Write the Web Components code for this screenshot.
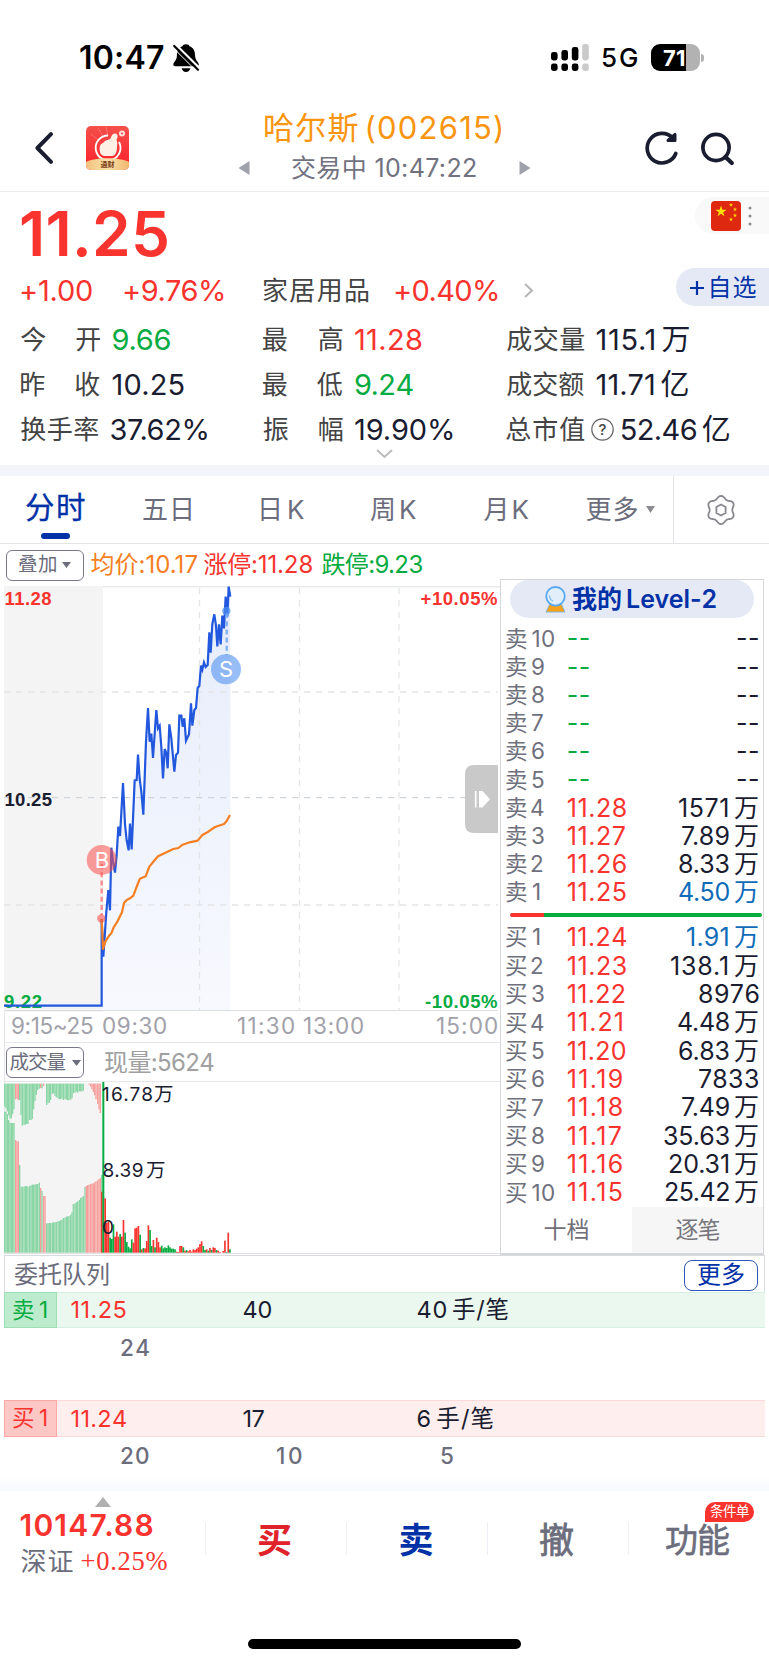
<!DOCTYPE html>
<html lang="zh-CN">
<head>
<meta charset="UTF-8">
<title>哈尔斯 002615</title>
<style>
  html { background: #fff; }
  body {
    margin: 0;
    width: 769px;
    height: 1665px;
    overflow: hidden;
    font-family: Inter, "Noto Sans CJK SC", sans-serif;
    font-size: 24px;
    line-height: 1;
    color: #1a1c30;
    --red: #f9332e;
    --green: #06ab41;
    --blue: #0031a6;
    --grey: #6c6d7c;
    --label: #444;
    --line: #e3e4e7;
  }
</style>
</head>
<body>
<stock-page></stock-page>

<script>
// строка текста, которая занимает ровно w пикселей от края первой буквы до края последней
// w - ширина, gap - отступ слева, size / weight / color - шрифт
const CJK = /[\u4e00-\u9fff]+/g;
const ctx = document.createElement("canvas").getContext("2d");

class InkText extends HTMLElement {
  constructor() {
    super();
    this.attachShadow({ mode: "open" }).innerHTML = `
      <style>
        :host { display: block; flex: none; white-space: nowrap; line-height: 1; }
        span { display: inline-block; }
      </style>
      <span><slot></slot></span>`;
  }

  connectedCallback() {
    if (this.ready) return;
    this.ready = true;
    const a = (name) => this.getAttribute(name);
    if (a("size")) this.style.fontSize = a("size") + "px";
    if (a("weight")) this.style.fontWeight = a("weight");
    if (a("color")) this.style.color = a("color");
    if (a("gap")) this.style.marginLeft = a("gap") + "px";

    const text = this.textContent.trim();
    const end = text.length - 1;
    // небольшой зазор между иероглифом и цифрой
    this.innerHTML = [...text].map((ch, i) => {
      const isCjk = ch.match(CJK);
      const style = [];
      if (isCjk && /[0-9A-Za-z]/.test(text[i - 1] || "")) style.push("margin-left:.16em");
      if (isCjk && /[0-9A-Za-z(]/.test(text[i + 1] || "")) style.push("margin-right:.16em");
      // после последней буквы интервал не нужен
      if (i === end && end > 0) style.push("letter-spacing:0");
      return style.length ? `<span style="${style.join(";")}">${ch}</span>` : ch;
    }).join("");

    ctx.font = getComputedStyle(this).font;
    const first = ctx.measureText(text[0]);
    const last = ctx.measureText(text[end]);
    const left = -first.actualBoundingBoxLeft;
    const right = last.width - last.actualBoundingBoxRight;
    const box = this.shadowRoot.querySelector("span");
    const ink = box.getBoundingClientRect().width - left - right;
    const w = Number(a("w")) || ink;
    if (end > 0) this.style.letterSpacing = (w - ink) / end + "px";
    box.style.marginLeft = -left + "px";
    this.style.width = w + "px";
  }
}
customElements.define("ink-text", InkText);

// базовый класс: css + html в открытом shadow root
class Block extends HTMLElement {
  connectedCallback() {
    if (this.shadowRoot) return;
    this.attachShadow({ mode: "open" }).innerHTML =
      `<style>:host { display: block; box-sizing: border-box; } svg { display: block; flex: none; overflow: visible; }${this.css()}</style>${this.html()}`;
  }
  css() { return ""; }
  html() { return "<slot></slot>"; }
}

class StatusBar extends Block {
  css() {
    return `
      :host { display: flex; align-items: center; height: 115px; color: #000; }
      .bell { margin-left: 9px; }
      .signal { margin-left: 352px; }
      .battery {
        display: flex; align-items: center; box-sizing: border-box;
        width: 49px; height: 27px; margin-left: 14px; padding-left: 12px; border-radius: 9px;
        background: linear-gradient(90deg, #000 35px, #b2b2b2 35px); color: #fff;
      }
      .nub { width: 3px; height: 8px; margin-left: 1px; border-radius: 0 3px 3px 0; background: #b2b2b2; }`;
  }
  html() {
    return `
      <ink-text w="84" gap="80" size="32" weight="600">10:47</ink-text>
      <svg class="bell" width="26" height="28" viewBox="0 0 26 28">
        <path d="M13 0.3C11 0.3 9.7 1.3 9.5 2.2C5.6 3.6 3.9 7 3.9 11.5C3.9 16.5 0.3 18 0.3 20.6C0.3 21.6 1.2 22.2 2.2 22.2H24C25 22.2 25.8 21.6 25.8 20.6C25.8 18 22.1 16.5 22.1 11.5C22.1 7 20.4 3.6 16.5 2.2C16.2 1.2 15 0.3 13 0.3Z"/>
        <path d="M8.6 24.2H17.4C16.8 26.6 15.2 27.9 13 27.9S9.2 26.6 8.6 24.2Z"/>
        <path d="M1.7 -0.5L27 24.6" stroke="#fff" stroke-width="2.2"/>
        <path d="M0 3.6L22 25.6" stroke="#fff" stroke-width="1"/>
        <path d="M1.2 2L25 25.8" stroke="#000" stroke-width="2.2" stroke-linecap="round"/>
      </svg>
      <svg class="signal" width="38" height="27" viewBox="0 0 38 27">
        <g fill="#000">
          <rect x="0" y="8" width="6.6" height="8.5" rx="2.4"/><rect x="0" y="19.5" width="6.6" height="7.5" rx="2.4"/>
          <rect x="10.4" y="6" width="6.6" height="10.5" rx="2.4"/><rect x="10.4" y="19.5" width="6.6" height="7.5" rx="2.4"/>
          <rect x="20.8" y="3" width="6.6" height="13.5" rx="2.4"/><rect x="20.8" y="19.5" width="6.6" height="7.5" rx="2.4"/>
        </g>
        <g fill="#cacaca">
          <rect x="31.2" y="0" width="6.6" height="16.5" rx="2.4"/><rect x="31.2" y="19.5" width="6.6" height="7.5" rx="2.4"/>
        </g>
      </svg>
      <ink-text w="35" gap="13" size="26" weight="500">5G</ink-text>
      <div class="battery"><ink-text w="22" size="22" weight="700">71</ink-text></div>
      <div class="nub"></div>`;
  }
}
customElements.define("status-bar", StatusBar);

class NavBar extends Block {
  css() {
    return `
      :host { display: flex; align-items: center; height: 77px; padding-bottom: 10px; border-bottom: 1px solid #ececee; }
      .title { align-self: flex-start; width: 293px; margin-left: 109px; }
      .name { display: flex; align-items: center; height: 25px; }
      .sub { display: flex; align-items: center; height: 25px; margin-top: 15.5px; }`;
  }
  html() {
    return `
      <svg width="18" height="32" viewBox="0 0 18 32" style="margin-left:35px">
        <path d="M16 2.2L2.4 16L16 29.8" fill="none" stroke="#1a1c30" stroke-width="4" stroke-linecap="round" stroke-linejoin="round"/>
      </svg>
      <svg width="43" height="44" viewBox="0 0 43 44" style="margin-left:33px">
        <defs>
          <linearGradient id="r" x1="0" y1="0" x2="0" y2="1"><stop offset="0" stop-color="#f5504a"/><stop offset="1" stop-color="#fb1f2b"/></linearGradient>
          <linearGradient id="y" x1="0" y1="0" x2="1" y2="0"><stop offset="0" stop-color="#f2c27c"/><stop offset=".5" stop-color="#fbe0aa"/><stop offset="1" stop-color="#efb96f"/></linearGradient>
          <clipPath id="c"><rect width="43" height="44" rx="5"/></clipPath>
        </defs>
        <g clip-path="url(#c)">
          <rect width="43" height="44" fill="url(#r)"/>
          <path d="M12 2L18 12M20 1L22 10M5 8L12 14" stroke="#ff8d80" stroke-width="1" opacity=".6"/>
          <path d="M22 9.5A12.4 12.4 0 1 0 33 16" fill="none" stroke="#fff" stroke-width="1.8"/>
          <path d="M14 20C14.5 17.5 17 17.5 18 16C20 13.5 23 14.5 24.5 12.5C25.5 10.5 26 7.5 29 7.5C32.5 8 32 11 30.5 14C32 17 31 19 31 21C31 25 30 29.5 26 30H18C14 29.5 13 24 14 20Z" fill="#fff0e6"/>
          <circle cx="36" cy="7.5" r="3" fill="#ffe1dc"/><circle cx="36" cy="7.5" r="1.1" fill="#f5504a"/>
          <path d="M0 36C10 31 33 31 43 36V44H0Z" fill="url(#y)"/>
        </g>
        <text x="14.5" y="40.6" font-size="7" font-weight="700" fill="#7a3d12" textLength="14">通财</text>
      </svg>
      <div class="title">
        <div class="name"><ink-text w="236" gap="27" size="31" color="#fa9510">哈尔斯(002615)</ink-text></div>
        <div class="sub">
          <svg width="12" height="14"><path d="M11.5 0V14L0.5 7Z" fill="#a0a1ac"/></svg>
          <ink-text w="184" gap="42" size="25" color="#717280">交易中 10:47:22</ink-text>
          <svg width="12" height="14" style="margin-left:43px"><path d="M0.5 0V14L11.5 7Z" fill="#a0a1ac"/></svg>
        </div>
      </div>
      <svg width="33" height="34" viewBox="0 0 33 34" style="margin-left:114px" fill="none" stroke="#1a1c30">
        <path d="M30.8 22.5A14.8 14.8 0 1 1 27.6 6.8" stroke-width="3.7" stroke-linecap="round"/>
        <path d="M30 3.4V9.4H23Z" stroke-width="3" stroke-linejoin="round" fill="#1a1c30"/>
      </svg>
      <svg width="33" height="33" viewBox="0 0 33 33" style="margin-left:23px" fill="none" stroke="#1a1c30" stroke-width="3.7">
        <circle cx="15" cy="15.5" r="13.1"/><path d="M24.5 25L30.8 31" stroke-width="4.2" stroke-linecap="round"/>
      </svg>`;
  }
}
customElements.define("nav-bar", NavBar);

// [label, ширина, value, ширина, цвет]
const stats = [
  [["今开", 80, "9.66", 58, "green"], ["最高", 80, "11.28", 67, "red"], ["成交量", 78, "115.1万", 93]],
  [["昨收", 80, "10.25", 71], ["最低", 80, "9.24", 58, "green"], ["成交额", 78, "11.71亿", 92]],
  [["换手率", 78, "37.62%", 97], ["振幅", 80, "19.90%", 98], ["总市值", 78, "52.46亿", 108, "", true]],
];

class QuoteHeader extends Block {
  css() {
    return `
      :host { height: 284px; border-bottom: 11px solid #f4f5fa; }
      .top { display: flex; height: 125px; }
      .main { width: 676px; }
      .price { display: flex; align-items: center; height: 84px; padding-left: 21px; }
      .diff { display: flex; align-items: center; height: 29px; padding-left: 21px; }
      .side { display: flex; flex-direction: column; align-items: flex-end; gap: 34px; padding-top: 5px; width: 93px; }
      .flag { display: flex; align-items: center; width: 74px; height: 37px; border-radius: 19px 0 0 19px; background: #f9f9fa; }
      .add { display: flex; align-items: center; width: 93px; height: 38px; border-radius: 19px 0 0 19px; background: #e5e9f6; }
      .stats { display: grid; grid-template-columns: 242.5px 243.5px 1fr; grid-auto-rows: 45px; padding-left: 20.2px; }
      .cell { display: flex; align-items: center; }
      .more { display: flex; justify-content: center; margin-top: -3px; }`;
  }
  html() {
    const cell = ([label, lw, value, vw, color, help]) => `
      <div class="cell">
        <ink-text w="${lw}" size="26" color="var(--label)">${label}</ink-text>
        ${help ? `<svg width="23" height="23" viewBox="0 0 23 23" style="margin-left:6.5px"><circle cx="11.5" cy="11.5" r="10.7" fill="none" stroke="#666" stroke-width="1.2"/><text x="11.5" y="16.7" font-size="15" font-weight="500" fill="#444" text-anchor="middle">?</text></svg>` : ""}
        <ink-text w="${vw}" gap="${help ? 8 : 12.3}" size="29" ${color ? `color="var(--${color})"` : ""}>${value}</ink-text>
      </div>`;
    const star = "M0 -1L.23 -.31L.95 -.31L.36 .12L.59 .81L0 .38L-.59 .81L-.36 .12L-.95 -.31L-.23 -.31Z";
    return `
      <div class="top">
        <div class="main">
          <div class="price"><ink-text w="146" size="62" weight="600" color="var(--red)">11.25</ink-text></div>
          <div class="diff">
            <ink-text w="71" size="29" color="var(--red)">+1.00</ink-text>
            <ink-text w="100" gap="32" size="29" color="var(--red)">+9.76%</ink-text>
            <ink-text w="106" gap="39" size="26" color="var(--label)">家居用品</ink-text>
            <ink-text w="103" gap="26" size="29" color="var(--red)">+0.40%</ink-text>
            <svg width="9" height="15" style="margin-left:26px"><path d="M1 1L8 7.5L1 14" fill="none" stroke="#b5b5b8" stroke-width="2"/></svg>
          </div>
        </div>
        <div class="side">
          <div class="flag">
            <svg width="30" height="30" viewBox="0 0 30 30" style="margin-left:16px">
              <rect width="30" height="30" rx="4" fill="#de2910"/>
              <g fill="#ffde00">
                <path d="${star}" transform="translate(10,10.5) scale(6)"/>
                <path d="${star}" transform="translate(20,4) scale(2.2)"/><path d="${star}" transform="translate(24,8.5) scale(2.2)"/>
                <path d="${star}" transform="translate(24,14.5) scale(2.2)"/><path d="${star}" transform="translate(20,18.5) scale(2.2)"/>
              </g>
            </svg>
            <svg width="4" height="20" style="margin-left:7px" fill="#8d8d92"><circle cx="2" cy="2" r="1.5"/><circle cx="2" cy="10" r="1.5"/><circle cx="2" cy="18" r="1.5"/></svg>
          </div>
          <div class="add">
            <svg width="14" height="14" style="margin:2px 0 0 14px"><path d="M7 0V14M0 7H14" stroke="#0031a6" stroke-width="2.2"/></svg>
            <ink-text w="46" gap="6.5" size="24" color="var(--blue)" style="margin-top:2px">自选</ink-text>
          </div>
        </div>
      </div>
      <div class="stats">${stats.flat().map(cell).join("")}</div>
      <div class="more"><svg width="17" height="10"><path d="M1 1L8.5 8L16 1" fill="none" stroke="#bbb" stroke-width="2"/></svg></div>`;
  }
}
customElements.define("quote-header", QuoteHeader);

class PeriodTab extends Block {
  css() {
    return `
      :host { display: flex; flex-direction: column; align-items: center; height: 67px; color: var(--grey); }
      div { display: flex; align-items: center; height: 57px; padding-top: 10px; box-sizing: border-box; }
      i { width: 29px; height: 6px; border-radius: 3px; }
      :host([active]) { color: var(--blue); }
      :host([active]) div { padding-top: 7px; -webkit-text-stroke: .3px; }
      :host([active]) i { background: var(--blue); }`;
  }
  html() { return `<div><slot></slot></div><i></i>`; }
}
customElements.define("period-tab", PeriodTab);

class PeriodTabs extends Block {
  css() {
    return `
      :host { display: flex; height: 68px; border-bottom: 1px solid var(--line); }
      .gear { display: flex; align-items: center; box-sizing: border-box; flex: 1; height: 67px; border-left: 1px solid var(--line); }`;
  }
  html() {
    // контур шестерёнки с шестью зубцами
    let gear = "";
    for (let i = 0; i < 72; i++) {
      const t = i * Math.PI / 36;
      const r = 12.7 + 1.4 * Math.cos(6 * t);
      gear += (i ? "L" : "M") + (15 + r * Math.sin(t)).toFixed(1) + " " + (15 - r * Math.cos(t)).toFixed(1);
    }
    return `
      <period-tab active style="margin-left:26px"><ink-text w="59" size="29.5">分时</ink-text></period-tab>
      <period-tab style="margin-left:58px"><ink-text w="48" size="26">五日</ink-text></period-tab>
      <period-tab style="margin-left:70px"><ink-text w="43" size="26">日K</ink-text></period-tab>
      <period-tab style="margin-left:66px"><ink-text w="46" size="26">周K</ink-text></period-tab>
      <period-tab style="margin-left:67.5px"><ink-text w="45" size="26">月K</ink-text></period-tab>
      <period-tab style="margin-left:58px"><ink-text w="51" size="26">更多</ink-text></period-tab>
      <svg width="9" height="7" style="margin:30px 18.5px 0 8px"><path d="M0 0H9L4.5 7Z" fill="#8c8c92"/></svg>
      <div class="gear">
        <svg width="30" height="30" viewBox="0 0 30 30" style="margin-left:32px" fill="none" stroke="#88888e" stroke-width="1.8" stroke-linejoin="round">
          <path d="${gear}Z"/><path d="M15 9.5L19.6 12V18L15 20.5L10.4 18V12Z"/>
        </svg>
      </div>`;
  }
}
customElements.define("period-tabs", PeriodTabs);

class DropButton extends Block {
  css() {
    return `
      :host {
        display: flex; align-items: center; justify-content: center; flex: none;
        width: 78px; height: 31px; border: 1.4px solid #77788a; border-radius: 6px; color: var(--grey);
      }
      svg { margin-left: 6px; }`;
  }
  html() { return `<slot></slot><svg width="9" height="6"><path d="M0 0H9L4.5 6Z" fill="#6c6d7c"/></svg>`; }
}
customElements.define("drop-button", DropButton);

// точки графиков в третях пикселя
const price = "12,1292 305,1292 305,1032 310,1145 314,1085 319,1010 325,945 330,1006 334,818 339,860 345,893 350,840 355,755 360,783 369,624 375,748 380,796 386,826 390,746 395,823 404,616 410,615 414,539 419,612 424,650 430,719 438,500 444,399 449,500 454,476 459,549 469,405 474,460 479,452 484,516 489,610 494,522 499,534 503,580 508,448 514,490 523,590 528,540 534,533 538,422 544,422 548,455 553,430 558,497 567,478 573,385 577,452 583,405 588,399 593,338 598,333 603,272 607,284 612,262 617,276 623,270 628,172 632,233 637,147 643,118 648,152 652,214 657,148 662,208 667,122 672,160 677,65 682,125 686,35 691,65";
const average = "305,1032 309,1122 316,1100 326,1084 334,1075 341,1057 352,1040 366,1012 372,984 380,975 390,970 400,962 412,930 420,911 437,904 448,875 462,858 474,844 490,836 520,822 535,819 548,809 565,803 593,797 607,780 625,770 645,756 672,747 680,738 690,720";

class PriceChart extends Block {
  css() {
    return `
      :host { height: 425px; }
      .b { font: bold 18.5px "Liberation Sans", sans-serif; }`;
  }
  html() {
    return `
      <svg width="500" height="425" viewBox="0 586 500 425">
        <defs><linearGradient id="g" x1="0" y1="0" x2="0" y2="1"><stop offset="0" stop-color="#e6ecfb"/><stop offset="1" stop-color="#f7f9fe"/></linearGradient></defs>
        <rect x="4" y="586" width="99" height="426" fill="#f4f4f4"/>
        <polygon points="${price.split(" ").slice(2).join(" ")} 691,1306 305,1306" fill="url(#g)" transform="translate(0,575) scale(.33333)"/>
        <g fill="none" stroke="#e4e5e7" stroke-width="1.3" stroke-dasharray="6.2 5.8">
          <path d="M4 692H498M4 905H498M199.5 588V1010M299.5 588V1010M399 588V1010"/>
          <path d="M4 797.7H498" stroke="#cfd5da"/>
        </g>
        <path d="M103 586.8H500M4 1010.5H498" stroke="#dcdfe2"/>
        <text class="b" x="4.5" y="605" fill="#f9332e" textLength="47">11.28</text>
        <text class="b" x="4.5" y="805.8" fill="#1a1c30" textLength="47.5">10.25</text>
        <text class="b" x="4" y="1007.5" fill="#06ab41" textLength="38">9.22</text>
        <text class="b" x="420.5" y="605" fill="#f9332e" textLength="77">+10.05%</text>
        <text class="b" x="425" y="1007.5" fill="#06ab41" textLength="72.5">-10.05%</text>
        <g fill="none" stroke-width="6.6" transform="translate(0,575) scale(.33333)">
          <polyline points="${price}" stroke="#2258dd"/>
          <polyline points="${average}" stroke="#f57f22" stroke-linejoin="round"/>
        </g>
        <path d="M101.7 864V915" stroke="#fb8e8b" stroke-width="2.4" stroke-dasharray="5 3.2"/>
        <circle cx="101.3" cy="918.5" r="4.2" fill="#f9524e" opacity=".6"/>
        <circle cx="101.7" cy="860" r="15" fill="#f9504b" opacity=".55"/>
        <text x="101.9" y="867.5" font-size="22" fill="#fff" text-anchor="middle">B</text>
        <path d="M226.7 613V655" stroke="#82b1f3" stroke-width="2.4" stroke-dasharray="5 3.2"/>
        <circle cx="226.3" cy="611" r="4.2" fill="#4f92f2" opacity=".7"/>
        <circle cx="226" cy="669.3" r="15" fill="#4389f0" opacity=".55"/>
        <text x="226" y="677.3" font-size="22" fill="#fff" text-anchor="middle">S</text>
        <path d="M498 765H474Q465 765 465 774V824Q465 833 474 833H498Z" fill="#c9c9c9"/>
        <path d="M475.7 791V807.5" stroke="#fff" stroke-width="1.6"/>
        <path d="M479 791H482.5L490 799.3L482.5 807.5H479Z" fill="#fff"/>
      </svg>`;
  }
}
customElements.define("price-chart", PriceChart);

// аукцион: [x, верхний край снизу, нижний край сверху, цвет]
const auction = [
  [12, 215, 200, "g"], [16, 215, 205, "g"], [20, 222, 214, "g"], [24, 240, 226, "g"], [28, 248, 236, "g"], [32, 249, 235, "g"], [36, 249, 222, "g"], [40, 249, 208, "g"],
  [45, 300, 178, "r"], [49, 304, 176, "r"], [53, 304, 180, "r"], [57, 375, 180, "g"], [61, 440, 225, "g"],
  [65, 440, 257, "g"], [70, 440, 254, "g"], [74, 438, 254, "g"], [78, 438, 252, "g"], [82, 440, 252, "g"], [87, 438, 240, "g"], [91, 436, 240, "g"], [95, 434, 236, "g"],
  [99, 434, 208, "g"], [103, 433, 183, "g"], [107, 433, 165, "g"], [111, 432, 150, "g"], [116, 428, 146, "g"], [120, 444, 144, "r"], [124, 453, 145, "g"], [129, 468, 138, "r"], [133, 468, 126, "r"],
  [138, 550, 195, "g"], [142, 550, 190, "g"], [146, 549, 188, "g"], [150, 549, 180, "g"], [155, 548, 162, "g"], [159, 547, 160, "g"], [163, 547, 168, "g"], [167, 546, 172, "g"], [172, 544, 175, "g"],
  [176, 543, 177, "g"], [180, 541, 178, "g"], [184, 539, 175, "g"], [188, 534, 180, "g"], [193, 533, 178, "g"], [197, 530, 178, "g"], [201, 529, 181, "g"], [205, 528, 180, "g"], [210, 524, 179, "g"], [214, 517, 175, "g"],
  [218, 492, 160, "g"], [223, 490, 158, "g"], [227, 487, 155, "g"], [231, 484, 158, "g"], [236, 480, 154, "g"], [240, 474, 154, "g"], [244, 472, 154, "g"], [248, 468, 152, "g"],
  [253, 441, 130, "g"], [257, 438, 126, "r"], [261, 435, 131, "r"], [265, 434, 134, "r"], [270, 432, 140, "r"], [274, 431, 148, "r"], [278, 430, 156, "r"], [282, 427, 166, "r"], [286, 424, 178, "r"], [291, 421, 192, "r"], [295, 417, 208, "r"], [299, 414, 219, "r"],
];
const volume = "r475 r548 r545 g593 g597 g553 r590 r575 r590 g582 r590 r540 g578 g606 g620 g625 g598 r608 r565 r563 r558 g584 r628 g624 r625 r603 r556 g570 g618 r600 g622 r593 r606 r622 g617 g625 g622 g624 g616 g622 g626 g626 g628 r635 r636 r618 r618 g622 r632 g630 r634 r630 r635 r628 r630 r626 r622 r612 r604 g618 g630 r628 g632 r624 g630 r622 r624 g630 r632 r636 g638 r633 r602 g636 r578 g628".split(" ");

class VolumeChart extends Block {
  css() { return `:host { height: 172px; }`; }
  html() {
    const bar = (x, y1, y2, fill, w) => `<rect x="${x}" y="${y1}" width="${w}" height="${Math.max(0, y2 - y1)}" fill="${fill}"/>`;
    const pale = { g: "#8ad6a4", r: "#f79f9d" };
    const solid = { g: "#06ab41", r: "#f9332e" };
    return `
      <svg width="500" height="172" viewBox="0 1082 500 172">
        <rect x="4" y="1083" width="98" height="170" fill="#f4f4f4"/>
        <path d="M4.5 1082V1254" stroke="#e3e6e8"/>
        <g transform="translate(0,1040) scale(.33333)">
          ${auction.map(([x, low, high, c]) => bar(x, 131, high, pale[c], 4) + bar(x, low, 638, pale[c], 4)).join("")}
          ${bar(303, 405, 455, "#90d8a8", 5)}${bar(303, 455, 638, "#e0402c", 5)}
          ${bar(307, 126, 638, "#06ab41", 6)}
          ${volume.map((v, i) => bar((313 + i * 4.99).toFixed(1), Number(v.slice(1)), 638, solid[v[0]], 4.99)).join("")}
        </g>
        <g font-size="19" fill="#1a1c30">
          <text x="102" y="1101" textLength="51">16.78</text><text x="154" y="1101" font-size="19.5">万</text>
          <text x="102.5" y="1177" textLength="41">8.39</text><text x="146" y="1177" font-size="19.5">万</text>
          <text x="102" y="1233.5">0</text>
        </g>
        <path d="M4 1253.5H500" stroke="#dfe1e4"/>
      </svg>`;
  }
}
customElements.define("volume-chart", VolumeChart);

class ChartPanel extends Block {
  css() {
    return `
      :host { width: 500px; flex: none; }
      .info { display: flex; align-items: center; height: 42px; padding-left: 6px; }
      .axis { display: flex; align-items: center; height: 31px; margin-left: 4px; border-left: 1px solid var(--line); color: #a1a1aa; border-bottom: 1px solid #e6e7ea; }
      .vol { display: flex; align-items: center; height: 37px; margin-left: 4px; padding: 1px 0 0 1px; border-left: 1px solid var(--line); border-bottom: 1px solid #e6e7ea; }`;
  }
  html() {
    return `
      <div class="info">
        <drop-button><ink-text w="37" size="19.5">叠加</ink-text></drop-button>
        <ink-text w="107" gap="6.4" color="#f57f22">均价:10.17</ink-text>
        <ink-text w="109" gap="6" color="var(--red)">涨停:11.28</ink-text>
        <ink-text w="101" gap="9" color="var(--green)">跌停:9.23</ink-text>
      </div>
      <price-chart></price-chart>
      <div class="axis">
        <ink-text w="81" gap="7" size="22.5">9:15~25</ink-text>
        <ink-text w="63" gap="10" size="22.5">09:30</ink-text>
        <ink-text w="56" gap="72" size="22.5">11:30</ink-text>
        <ink-text w="59" gap="10" size="22.5">13:00</ink-text>
        <ink-text w="60" gap="74" size="22.5">15:00</ink-text>
      </div>
      <div class="vol">
        <drop-button><ink-text w="56" size="19.5">成交量</ink-text></drop-button>
        <ink-text w="109" gap="21" color="#a0a0a0">现量:5624</ink-text>
      </div>
      <volume-chart></volume-chart>`;
  }
}
customElements.define("chart-panel", ChartPanel);

const sell = [
  ["卖10", 48], ["卖9", 38], ["卖8", 38], ["卖7", 37], ["卖6", 38], ["卖5", 38],
  ["卖4", 38, "11.28", 58, "1571万", 79], ["卖3", 38, "11.27", 57, "7.89万", 76],
  ["卖2", 37, "11.26", 58, "8.33万", 79], ["卖1", 34, "11.25", 58, "4.50万", 79, "#0f6cb8"],
];
const buy = [
  ["买1", 34, "11.24", 58, "1.91万", 71, "#0f6cb8"], ["买2", 37, "11.23", 58, "138.1万", 87],
  ["买3", 38, "11.22", 57, "8976", 59], ["买4", 38, "11.21", 54, "4.48万", 80],
  ["买5", 38, "11.20", 58, "6.83万", 79], ["买6", 38, "11.19", 54, "7833", 59],
  ["买7", 37, "11.18", 54, "7.49万", 76], ["买8", 38, "11.17", 53, "35.63万", 94],
  ["买9", 38, "11.16", 54, "20.31万", 89], ["买10", 48, "11.15", 54, "25.42万", 93],
];

class OrderBook extends Block {
  css() {
    return `
      :host { width: 264px; height: 676px; margin-top: 35px; border: 1px solid #d5d6da; border-bottom-width: 2px; }
      .level2 { display: flex; align-items: center; height: 38px; margin: 0 9px; padding-left: 35px; border-radius: 19px; background: #e5e9f6; }
      .rows { display: flex; flex-direction: column; }
      .row { display: grid; grid-template-columns: 61.8px 1fr auto; align-items: center; padding: 0 5px; }
      .sell { margin-top: 6.9px; } .sell .row { height: 28.2px; }
      .buy .row { height: 28.35px; }
      .ratio { height: 4px; margin: 6.2px 1px 6.6px 9px; border-radius: 2px; background: linear-gradient(90deg, #f9332e 34px, #0aac40 34px); }
      .tabs { display: grid; grid-template-columns: 131px 1fr; height: 46px; }
      .tabs div { display: flex; align-items: center; justify-content: center; padding-top: 2px; }
      .tabs div + div { background: #f6f6f7; }`;
  }
  html() {
    const row = ([label, lw, p, pw, v, vw, color]) => `
      <div class="row">
        <ink-text w="${lw}" size="22.5" color="#6f707d">${label}</ink-text>
        <ink-text w="${p ? pw : 21}" size="25" color="var(--${p ? "red" : "green"})">${p || "--"}</ink-text>
        <ink-text w="${v ? vw : 21}" size="25" ${color ? `color="${color}"` : ""}>${v || "--"}</ink-text>
      </div>`;
    return `
      <div class="level2">
        <svg width="21" height="27" viewBox="0 0 21 27">
          <path d="M4.5 18.5H16.5L20 26H1Z" fill="#f7a21b" stroke="#6db3ee" stroke-width=".8"/>
          <circle cx="10.5" cy="10.3" r="9.3" fill="#e2effb" stroke="#56a9ef" stroke-width="1.8"/>
          <path d="M4.5 9.5C4.6 12 6 14.2 8 15" fill="none" stroke="#79b9f1" stroke-width="1.2"/>
        </svg>
        <ink-text w="144" gap="6" size="25" weight="600" color="var(--blue)">我的Level-2</ink-text>
      </div>
      <div class="rows sell">${sell.map(row).join("")}</div>
      <div class="ratio"></div>
      <div class="rows buy">${buy.map(row).join("")}</div>
      <div class="tabs">
        <div><ink-text w="44" size="23" color="#707078">十档</ink-text></div>
        <div><ink-text w="44" size="23" color="#77777d">逐笔</ink-text></div>
      </div>`;
  }
}
customElements.define("order-book", OrderBook);

class OrderQueue extends Block {
  css() {
    return `
      :host { height: 221px; padding: 0 4px; }
      .head { display: flex; align-items: center; justify-content: space-between; box-sizing: border-box; height: 37px; border: 1px solid #d9dade; border-bottom: 0; padding: 2px 6px 0 9px; }
      .more { display: flex; align-items: center; justify-content: center; box-sizing: border-box; width: 74px; height: 31px; border: 1.5px solid #2e55b6; border-radius: 8px; }
      .level { display: flex; align-items: center; box-sizing: border-box; height: 36px; }
      .tag { display: flex; align-items: center; box-sizing: border-box; width: 53px; height: 36px; padding-left: 9px; }
      .s { background: #eaf8ef; box-shadow: inset 0 1px #d5f1df, inset 0 -1px #d5f1df; } .s .tag { background: #bdebcd; box-shadow: inset 0 0 0 1px #a0dfb6; }
      .b { height: 37px; background: #feeeee; box-shadow: inset 0 1px #fddada, inset 0 -1px #fddada; } .b .tag { height: 37px; background: #fdc7c6; box-shadow: inset 0 0 0 1px #fba8a6; }
      .hands { display: flex; height: 63px; padding: 9px 0 0 117px; color: var(--grey); font-weight: 500; }
      .b + .hands { padding-top: 8px; }`;
  }
  html() {
    return `
      <div class="head">
        <ink-text w="95" size="24" color="var(--grey)">委托队列</ink-text>
        <div class="more"><ink-text w="46" size="24" color="var(--blue)">更多</ink-text></div>
      </div>
      <div class="level s">
        <div class="tag"><ink-text w="34" size="22.5" color="var(--green)">卖1</ink-text></div>
        <ink-text w="54" gap="14.6" size="23.5" color="var(--red)">11.25</ink-text>
        <ink-text w="28" gap="118" size="23.5">40</ink-text>
        <ink-text w="91" gap="146" size="23.5">40手/笔</ink-text>
      </div>
      <div class="hands"><ink-text w="28" size="22.5">24</ink-text></div>
      <div class="level b">
        <div class="tag"><ink-text w="34" size="22.5" color="var(--red)">买1</ink-text></div>
        <ink-text w="54" gap="14.6" size="23.5" color="var(--red)">11.24</ink-text>
        <ink-text w="21" gap="118" size="23.5">17</ink-text>
        <ink-text w="76" gap="153" size="23.5">6手/笔</ink-text>
      </div>
      <div class="hands">
        <ink-text w="28" size="22.5">20</ink-text>
        <ink-text w="25" gap="128" size="22.5">10</ink-text>
        <ink-text w="13" gap="139" size="22.5">5</ink-text>
      </div>`;
  }
}
customElements.define("order-queue", OrderQueue);

class TradeButton extends Block {
  css() {
    return `
      :host { position: relative; display: flex; align-items: center; justify-content: center; width: 141px; height: 98px; flex: none; }
      :host::before { content: ""; position: absolute; left: 1px; top: 31px; width: 1px; height: 33px; background: #eef0f8; }
      ::slotted([slot=badge]) {
        position: absolute; left: 78px; top: 11px; display: flex; align-items: center; justify-content: center;
        width: 49px; height: 20px; border-radius: 10px 10px 10px 0; background: #f9332e; color: #fff;
      }`;
  }
  html() { return `<slot></slot><slot name="badge"></slot>`; }
}
customElements.define("trade-button", TradeButton);

class TradeBar extends Block {
  css() {
    return `
      :host { display: flex; flex-direction: column; }
      .shade { height: 15px; background: linear-gradient(#fff, #f7f9fd); }
      .bar { display: flex; }
      .index { width: 204px; }
      .line { display: flex; align-items: center; padding-left: 20.5px; }
      .home { width: 273px; height: 10px; margin: 50px 0 0 248px; border-radius: 5px; background: #000; }`;
  }
  html() {
    return `
      <div class="shade"></div>
      <div class="bar">
        <div class="index">
          <svg width="16" height="10" style="margin:6px 0 0 95px"><path d="M8 0L16 10H0Z" fill="#b0b0b0"/></svg>
          <div class="line" style="height:36px"><ink-text w="132" size="30" weight="600" color="var(--red)">10147.88</ink-text></div>
          <div class="line" style="height:38px">
            <ink-text w="52" size="26" color="var(--grey)">深证</ink-text>
            <ink-text w="86" gap="9" size="26.5" color="var(--red)" style="font-family:'Liberation Serif',serif;margin-top:-2px">+0.25%</ink-text>
          </div>
        </div>
        <trade-button><ink-text w="33" size="35" weight="700" color="#e0222a">买</ink-text></trade-button>
        <trade-button><ink-text w="32" size="35" weight="700" color="var(--blue)">卖</ink-text></trade-button>
        <trade-button><ink-text w="33" size="35" color="var(--grey)" style="-webkit-text-stroke:.8px">撤</ink-text></trade-button>
        <trade-button>
          <ink-text w="63" size="33" color="var(--grey)" style="-webkit-text-stroke:.6px">功能</ink-text>
          <div slot="badge"><ink-text w="39" size="13.5">条件单</ink-text></div>
        </trade-button>
      </div>
      <div class="home"></div>`;
  }
}
customElements.define("trade-bar", TradeBar);

class StockPage extends Block {
  css() { return `.split { display: flex; height: 711px; }`; }
  html() {
    return `
      <status-bar></status-bar>
      <nav-bar></nav-bar>
      <quote-header></quote-header>
      <period-tabs></period-tabs>
      <div class="split">
        <chart-panel></chart-panel>
        <order-book></order-book>
      </div>
      <order-queue></order-queue>
      <trade-bar></trade-bar>`;
  }
}
customElements.define("stock-page", StockPage);
</script>
</body>
</html>
